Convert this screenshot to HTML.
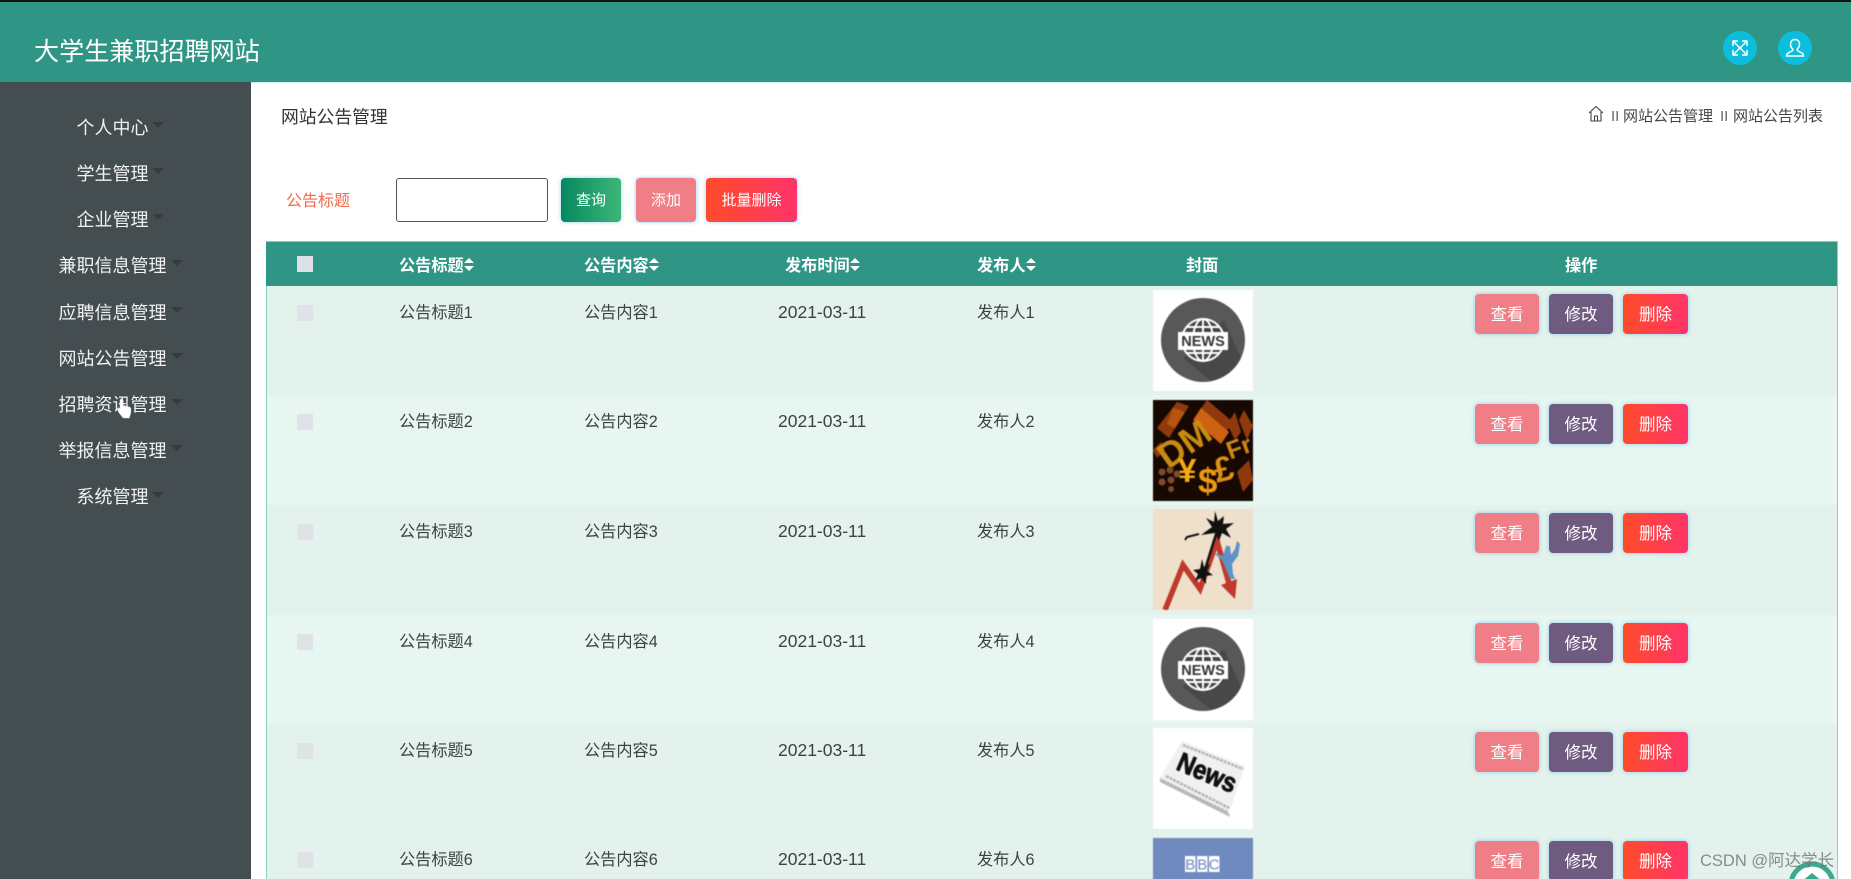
<!DOCTYPE html>
<html lang="zh-CN">
<head>
<meta charset="utf-8">
<title>大学生兼职招聘网站</title>
<style>
html,body{margin:0;padding:0;width:1851px;height:879px;overflow:hidden;background:#fff}
body{position:relative;font-family:"Liberation Sans","Noto Sans CJK SC",sans-serif;color:#3a3f42;filter:blur(.3px)}
.a{position:absolute;white-space:nowrap}
#top{left:0;top:0;width:1851px;height:82px;background:#2f9686;border-top:2px solid #111;box-sizing:border-box}
#side{left:0;top:82px;width:251px;height:797px;background:#444d50}
.m{color:#f2f2f2;font-size:18px;line-height:26px;left:0;width:225px;text-align:center}
.c{width:0;height:0;border-left:6px solid transparent;border-right:6px solid transparent;border-top:6px solid #353b3e}
.btn{color:#fff;text-align:center;border-radius:4px;box-shadow:0 0 4px rgba(110,190,240,.75);white-space:nowrap}
.th{color:#fff;font-weight:700;font-size:16.200px;line-height:24px;top:254px}
.s1,.s2{width:0;height:0;border-left:5px solid transparent;border-right:5px solid transparent}
.s1{border-bottom:5.500px solid #fff}.s2{border-top:5.500px solid #fff}
.row{position:absolute;left:267px;width:1570px;height:110px;overflow:hidden}
.row.o{background:#e3f2ec}.row.e{background:#e7f6f0}
.t{position:absolute;top:15px;font-size:16.200px;line-height:25px;white-space:nowrap;color:#3c4245}
.d{font-size:17.500px;top:14px}
.k{position:absolute;left:30px;top:18.500px;width:16px;height:16px;background:#dfe3e8}
.i{position:absolute;left:886px;top:4px;width:100px;height:101px;filter:blur(.5px)}
.b{position:absolute;top:8px;width:64px;height:40px;line-height:43px;font-size:16.500px}
.b1{left:1208px;background:#ef7e86}
.b2{left:1282px;background:#6f5b80}
.b3{left:1356px;width:65px;background:linear-gradient(90deg,#ff4b2b,#ff3469)}
</style>
</head>
<body>
<div class="a" id="top"></div>
<div class="a" style="left:34px;top:34px;font-size:25.100px;line-height:36px;color:#fff">大学生兼职招聘网站</div>
<svg class="a" style="left:1722px;top:30px" width="36" height="36" viewBox="0 0 36 36"><circle cx="18" cy="18" r="17" fill="#0bbfdc"/><path d="M11 11l14 14M25 11L11 25M11 16v-5h5M20 11h5v5M25 20v5h-5M16 25h-5v-5" stroke="#fff" stroke-width="1.500" fill="none"/></svg>
<svg class="a" style="left:1777px;top:30px" width="36" height="36" viewBox="0 0 36 36"><circle cx="18" cy="18" r="17" fill="#0bbfdc"/><path d="M18 9.500c-3 0-4.500 2.200-4.500 4.800 0 2 .9 3.700 2.200 4.700v1.500l-4.700 2.700c-1 .6-1.500 1.300-1.500 2.800h17c0-1.500-.5-2.200-1.500-2.800l-4.700-2.700V19c1.300-1 2.200-2.700 2.200-4.700 0-2.600-1.500-4.800-4.500-4.800z" stroke="#fff" stroke-width="1.500" fill="none"/></svg>
<div class="a" style="left:251px;top:82px;width:1600px;height:1px;background:#d5ece6"></div>

<div class="a" id="side"></div>
<div class="a m" style="top:115px">个人中心</div><div class="a c" style="left:152px;top:122px"></div>
<div class="a m" style="top:161px">学生管理</div><div class="a c" style="left:152px;top:168px"></div>
<div class="a m" style="top:207px">企业管理</div><div class="a c" style="left:152px;top:214px"></div>
<div class="a m" style="top:253px">兼职信息管理</div><div class="a c" style="left:171px;top:260px"></div>
<div class="a m" style="top:300px">应聘信息管理</div><div class="a c" style="left:171px;top:307px"></div>
<div class="a m" style="top:345.500px">网站公告管理</div><div class="a c" style="left:171px;top:353px"></div>
<div class="a m" style="top:391.500px">招聘资讯管理</div><div class="a c" style="left:171px;top:399px"></div>
<div class="a m" style="top:437.500px">举报信息管理</div><div class="a c" style="left:171px;top:445px"></div>
<div class="a m" style="top:484px">系统管理</div><div class="a c" style="left:152px;top:492px"></div>
<svg class="a" style="left:117px;top:398px" width="17" height="22" viewBox="0 0 17 22"><path d="M4.500 1c1.100 0 1.700.7 1.700 1.700v5.300c.8-.6 2-.5 2.500.4.800-.5 1.900-.3 2.400.6.900-.4 2.200 0 2.500 1.200.5 1.800.3 4.400-.3 6.300l-1 3.500H6.200L1.500 14 .8 11.500c-.2-1 .9-1.700 1.700-1l.5.500V2.700C3 1.700 3.500 1 4.500 1z" fill="#fff" stroke="#d8d8d8" stroke-width=".6"/></svg>

<div class="a" style="left:281px;top:103px;font-size:17.800px;line-height:28px;color:#333">网站公告管理</div>
<svg class="a" style="left:1588px;top:105px" width="16" height="17" viewBox="0 0 16 17"><path d="M1 8l7-6.500L15 8M3 7v9h10V7M6.500 16v-5h3v5" stroke="#444" stroke-width="1.100" fill="none"/></svg>
<div class="a" style="left:1611px;top:105.500px;font-size:15px;line-height:22px;color:#666;font-weight:400">II</div>
<div class="a" style="left:1623px;top:105.500px;font-size:15px;line-height:22px;color:#444">网站公告管理</div>
<div class="a" style="left:1720px;top:105.500px;font-size:15px;line-height:22px;color:#666">II</div>
<div class="a" style="left:1733px;top:105.500px;font-size:15px;line-height:22px;color:#444">网站公告列表</div>

<div class="a" style="left:286px;top:190px;font-size:16px;line-height:24px;color:#f2694a">公告标题</div>
<div class="a" style="left:396px;top:178px;width:152px;height:44px;border:1px solid #555;border-radius:3px;box-sizing:border-box;background:#fff"></div>
<div class="a btn" style="left:561px;top:178px;width:60px;height:44px;line-height:46px;font-size:15px;background:linear-gradient(90deg,#06885f,#3eb678)">查询</div>
<div class="a btn" style="left:636px;top:178px;width:60px;height:44px;line-height:46px;font-size:15px;background:#ef7e86">添加</div>
<div class="a btn" style="left:706px;top:178px;width:91px;height:44px;line-height:46px;font-size:15px;background:linear-gradient(90deg,#ff4b2b,#ff3469)">批量删除</div>

<div class="a" style="left:266px;top:241px;width:1572px;height:45px;background:#2f9686;border-top:1px solid #8cc9bb;box-sizing:border-box"></div>
<div class="a" style="left:297px;top:256px;width:16px;height:16px;background:#dde0e6"></div>
<div class="a th" style="left:399px">公告标题</div><div class="a s1" style="left:464px;top:258px"></div><div class="a s2" style="left:464px;top:265.500px"></div>
<div class="a th" style="left:584px">公告内容</div><div class="a s1" style="left:649px;top:258px"></div><div class="a s2" style="left:649px;top:265.500px"></div>
<div class="a th" style="left:785px">发布时间</div><div class="a s1" style="left:850px;top:258px"></div><div class="a s2" style="left:850px;top:265.500px"></div>
<div class="a th" style="left:977px">发布人</div><div class="a s1" style="left:1026px;top:258px"></div><div class="a s2" style="left:1026px;top:265.500px"></div>
<div class="a th" style="left:1186px">封面</div>
<div class="a th" style="left:1565px">操作</div>

<!-- row 1 -->
<div class="row o" style="top:286px">
<div class="k"></div><div class="t" style="left:132px">公告标题1</div><div class="t" style="left:317px">公告内容1</div><div class="t d" style="left:511px">2021-03-11</div><div class="t" style="left:710px">发布人1</div>
<svg class="i" viewBox="0 0 100 101" preserveAspectRatio="none"><rect width="100" height="101" fill="#fff"/><circle cx="50" cy="50" r="42" fill="#585858"/><path d="M71 30 L88 68 A42 42 0 0 1 58 91 L30 68z" fill="#484848"/><circle cx="50" cy="50" r="21" fill="#444"/><g stroke="#fff" stroke-width="2" fill="none"><circle cx="50" cy="50" r="21"/><ellipse cx="50" cy="50" rx="10" ry="21"/><path d="M50 29v42M33 37h34M33 63h34"/></g><rect x="25" y="42" width="50" height="18" fill="#fff"/><text x="50" y="56" text-anchor="middle" font-family="Liberation Sans" font-weight="700" font-size="14.500" fill="#333">NEWS</text></svg>
<div class="b btn b1">查看</div><div class="b btn b2">修改</div><div class="b btn b3">删除</div>
</div>
<!-- row 2 -->
<div class="row e" style="top:395px">
<div class="k"></div><div class="t" style="left:132px">公告标题2</div><div class="t" style="left:317px">公告内容2</div><div class="t d" style="left:511px">2021-03-11</div><div class="t" style="left:710px">发布人2</div>
<svg class="i" style="top:5px" viewBox="0 0 100 101" preserveAspectRatio="none"><rect width="100" height="101" fill="#170802"/><path d="M4 28L24 2 36 6 16 38zM44 14L54 0 80 22 66 42zM74 24l8-12 6 20-6 8zM86 20l5-10 9 16-6 14zM84 72l12-12 4 20-10 12zM0 50l8-8 4 8-8 8z" fill="#8f3a0c"/><path d="M48 8l28 24-8 12-28-24z" fill="#cf6212"/><path d="M20 8l12 4-10 16-8-4z" fill="#b85410"/><text x="6" y="64" transform="rotate(-35 20 52)" font-family="Liberation Sans" font-weight="700" font-size="36" fill="#c98a14">DM</text><text x="25" y="82" font-family="Liberation Sans" font-weight="700" font-size="33" fill="#f5ad12">¥</text><text x="45" y="93" font-family="Liberation Sans" font-weight="700" font-size="35" fill="#eb9a10">$</text><text x="61" y="81" font-family="Liberation Sans" font-weight="700" font-size="35" transform="rotate(-14 70 70)" fill="#dd9012">£</text><text x="74" y="58" font-family="Liberation Sans" font-weight="700" font-size="25" transform="rotate(-20 80 50)" fill="#d08612">Fr</text><g fill="#7e4a28"><circle cx="9" cy="72" r="3.500"/><circle cx="17" cy="70" r="3.500"/><circle cx="24" cy="74" r="3.500"/><circle cx="9" cy="82" r="3.500"/><circle cx="18" cy="80" r="3.500"/><circle cx="18" cy="89" r="3"/></g></svg>
<div class="b btn b1" style="top:9px">查看</div><div class="b btn b2" style="top:9px">修改</div><div class="b btn b3" style="top:9px">删除</div>
</div>
<!-- row 3 -->
<div class="row o" style="top:505px">
<div class="k"></div><div class="t" style="left:132px">公告标题3</div><div class="t" style="left:317px">公告内容3</div><div class="t d" style="left:511px">2021-03-11</div><div class="t" style="left:710px">发布人3</div>
<svg class="i" viewBox="0 0 100 101" preserveAspectRatio="none"><rect width="100" height="101" fill="#efe0cb"/><path d="M12 101L30 56 47 80 64 32 77 78" stroke="#bf3a2c" stroke-width="5.500" fill="none"/><path d="M68 76L84 70 82 90z" fill="#c0392b"/><path d="M49 70L64 22" stroke="#111" stroke-width="2.500"/><path d="M62 2l3 10 6-5-1 8 11-1-8 6 5 9-9-5-3 8-4-8-14 2 11-8-6-9 8 4z" fill="#111"/><path d="M49 50l2 8 6-3-3 7 6 4-7 1 0 8-5-6-6 3 3-7-5-4 7-1z" fill="#111"/><path d="M46 25l-12 3-2 3" stroke="#111" stroke-width="2" fill="none"/><path d="M62 44l8 3 3-10 4 0 1 9 4-6 2-8 3 3-2 12-6 8 1 10 2 5-5 0-5-12-3-7-6-5z" fill="#5c93c6"/></svg>
<div class="b btn b1">查看</div><div class="b btn b2">修改</div><div class="b btn b3">删除</div>
</div>
<!-- row 4 -->
<div class="row e" style="top:615px">
<div class="k"></div><div class="t" style="left:132px">公告标题4</div><div class="t" style="left:317px">公告内容4</div><div class="t d" style="left:511px">2021-03-11</div><div class="t" style="left:710px">发布人4</div>
<svg class="i" viewBox="0 0 100 101" preserveAspectRatio="none"><rect width="100" height="101" fill="#fff"/><circle cx="50" cy="50" r="42" fill="#585858"/><path d="M71 30 L88 68 A42 42 0 0 1 58 91 L30 68z" fill="#484848"/><circle cx="50" cy="50" r="21" fill="#444"/><g stroke="#fff" stroke-width="2" fill="none"><circle cx="50" cy="50" r="21"/><ellipse cx="50" cy="50" rx="10" ry="21"/><path d="M50 29v42M33 37h34M33 63h34"/></g><rect x="25" y="42" width="50" height="18" fill="#fff"/><text x="50" y="56" text-anchor="middle" font-family="Liberation Sans" font-weight="700" font-size="14.500" fill="#333">NEWS</text></svg>
<div class="b btn b1">查看</div><div class="b btn b2">修改</div><div class="b btn b3">删除</div>
</div>
<!-- row 5 -->
<div class="row o" style="top:724px">
<div class="k"></div><div class="t" style="left:132px">公告标题5</div><div class="t" style="left:317px">公告内容5</div><div class="t d" style="left:511px">2021-03-11</div><div class="t" style="left:710px">发布人5</div>
<svg class="i" viewBox="0 0 100 101" preserveAspectRatio="none"><rect width="100" height="101" fill="#fff"/><path d="M29 13L92 38 76 85 7 50z" fill="#f0f0f0"/><path d="M7 50L76 85 77 89 7 54z" fill="#bbb"/><path d="M30 17L90 41M13 48L76 80M10 53L74 84" stroke="#b4b4b4" stroke-width="2.500" stroke-dasharray="3 1"/><text x="22" y="41" transform="rotate(23 22 41)" font-family="Liberation Sans" font-weight="700" font-size="27" textLength="62" lengthAdjust="spacingAndGlyphs" fill="#111" stroke="#111" stroke-width=".9">News</text></svg>
<div class="b btn b1">查看</div><div class="b btn b2">修改</div><div class="b btn b3">删除</div>
</div>
<!-- row 6 -->
<div class="row o" style="top:833px;height:46px">
<div class="k"></div><div class="t" style="left:132px">公告标题6</div><div class="t" style="left:317px">公告内容6</div><div class="t d" style="left:511px">2021-03-11</div><div class="t" style="left:710px">发布人6</div>
<svg class="i" style="top:5px" viewBox="0 0 100 101" preserveAspectRatio="none"><rect width="100" height="101" fill="#6f8abf"/><g fill="#fff"><rect x="32" y="18" width="10.500" height="16"/><rect x="44" y="18" width="10.500" height="16"/><rect x="56" y="18" width="10.500" height="16"/></g><g font-family="Liberation Sans" font-size="15" fill="#6f8abf" text-anchor="middle"><text x="37.200" y="31.500">B</text><text x="49.200" y="31.500">B</text><text x="61.200" y="31.500">C</text></g></svg>
<div class="b btn b1">查看</div><div class="b btn b2">修改</div><div class="b btn b3">删除</div>
</div>

<div class="a" style="left:266px;top:286px;width:1px;height:593px;background:#8fd3c3"></div>
<div class="a" style="left:1837px;top:241px;width:1px;height:638px;background:#8fd3c3"></div>
<svg class="a" style="left:1786px;top:858px" width="51" height="21" viewBox="0 0 51 21"><circle cx="26" cy="27" r="21" fill="#fff" stroke="#3aa98f" stroke-width="5"/><path d="M26 15l-11 9h22z" fill="#3aa98f"/></svg>
<div class="a" style="left:1700px;top:848px;font-size:16.500px;line-height:26px;color:rgba(110,115,115,.8)">CSDN @阿达学长</div>
</body>
</html>
